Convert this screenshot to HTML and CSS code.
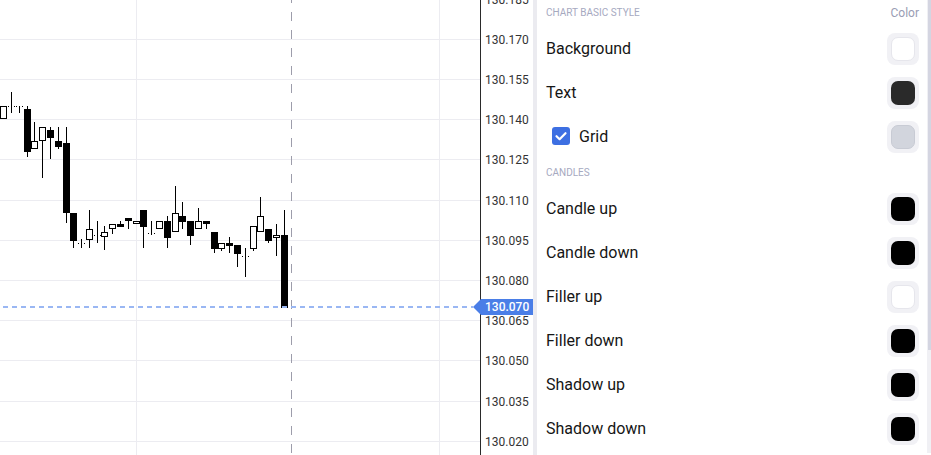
FILE: index.html
```html
<!DOCTYPE html>
<html lang="en">
<head>
<meta charset="utf-8">
<title>Chart style</title>
<link rel="stylesheet" href="styles.css">
</head>
<body>
<div class="app">
  <div class="chart-wrap">
    <svg class="chart" width="533" height="455" viewBox="0 0 533 455" xmlns="http://www.w3.org/2000/svg">
      <g class="grid" stroke="#ececf1" stroke-width="1" shape-rendering="crispEdges">
        <line x1="0" y1="39.5" x2="480" y2="39.5"/>
        <line x1="0" y1="79.5" x2="480" y2="79.5"/>
        <line x1="0" y1="119.5" x2="480" y2="119.5"/>
        <line x1="0" y1="159.5" x2="480" y2="159.5"/>
        <line x1="0" y1="200.5" x2="480" y2="200.5"/>
        <line x1="0" y1="240.5" x2="480" y2="240.5"/>
        <line x1="0" y1="280.5" x2="480" y2="280.5"/>
        <line x1="0" y1="320.5" x2="480" y2="320.5"/>
        <line x1="0" y1="360.5" x2="480" y2="360.5"/>
        <line x1="0" y1="401.5" x2="480" y2="401.5"/>
        <line x1="0" y1="441.5" x2="480" y2="441.5"/>
        <line x1="136.5" y1="0" x2="136.5" y2="455"/>
        <line x1="439.5" y1="0" x2="439.5" y2="455"/>
      </g>

      <line x1="291.5" y1="0" x2="291.5" y2="455" stroke="#9d9dab" stroke-width="1" stroke-dasharray="9 9" stroke-dashoffset="6" shape-rendering="crispEdges"/>

      <g class="candles" shape-rendering="crispEdges">
        <g stroke="#000" stroke-width="1">
          <line x1="11.5" y1="92" x2="11.5" y2="113"/>
          <line x1="19.5" y1="106" x2="19.5" y2="113"/>
          <line x1="27.5" y1="106" x2="27.5" y2="157"/>
          <line x1="34.5" y1="122" x2="34.5" y2="141"/>
          <line x1="42.5" y1="141" x2="42.5" y2="178"/>
          <line x1="50.5" y1="127" x2="50.5" y2="159"/>
          <line x1="58.5" y1="127" x2="58.5" y2="149"/>
          <line x1="66.5" y1="127" x2="66.5" y2="223"/>
          <line x1="73.5" y1="213" x2="73.5" y2="248"/>
          <line x1="81.5" y1="239" x2="81.5" y2="248"/>
          <line x1="89.5" y1="210" x2="89.5" y2="248"/>
          <line x1="97.5" y1="221" x2="97.5" y2="243"/>
          <line x1="104.5" y1="226" x2="104.5" y2="250"/>
          <line x1="112.5" y1="229" x2="112.5" y2="234"/>
          <line x1="120.5" y1="221" x2="120.5" y2="227"/>
          <line x1="128.5" y1="218" x2="128.5" y2="229"/>
          <line x1="143.5" y1="210" x2="143.5" y2="248"/>
          <line x1="151.5" y1="221" x2="151.5" y2="235"/>
          <line x1="167.5" y1="216" x2="167.5" y2="248"/>
          <line x1="175.5" y1="186" x2="175.5" y2="213"/>
          <line x1="182.5" y1="202" x2="182.5" y2="229"/>
          <line x1="190.5" y1="221" x2="190.5" y2="245"/>
          <line x1="198.5" y1="208" x2="198.5" y2="221"/>
          <line x1="206.5" y1="221" x2="206.5" y2="229"/>
          <line x1="214.5" y1="232" x2="214.5" y2="253"/>
          <line x1="221.5" y1="249" x2="221.5" y2="251"/>
          <line x1="229.5" y1="237" x2="229.5" y2="253"/>
          <line x1="237.5" y1="245" x2="237.5" y2="267"/>
          <line x1="245.5" y1="248" x2="245.5" y2="277"/>
          <line x1="253.5" y1="249" x2="253.5" y2="251"/>
          <line x1="260.5" y1="197" x2="260.5" y2="216"/>
          <line x1="268.5" y1="229" x2="268.5" y2="243"/>
          <line x1="276.5" y1="224" x2="276.5" y2="256"/>
          <line x1="284.5" y1="210" x2="284.5" y2="236"/>
        </g>
        <g stroke="#000" stroke-width="1" stroke-dasharray="1 2">
          <line x1="8" y1="106.5" x2="16" y2="106.5"/>
          <line x1="16" y1="106.5" x2="24" y2="106.5"/>
          <line x1="78" y1="243.5" x2="86" y2="243.5"/>
          <line x1="94" y1="235.5" x2="101" y2="235.5"/>
          <line x1="148" y1="233.5" x2="156" y2="233.5"/>
          <line x1="242" y1="256.5" x2="250" y2="256.5"/>
        </g>
        <g fill="#000">
          <rect x="24" y="109" width="7" height="43"/>
          <rect x="47" y="130" width="7" height="8"/>
          <rect x="55" y="141" width="7" height="6"/>
          <rect x="63" y="143" width="7" height="70"/>
          <rect x="70" y="213" width="7" height="28"/>
          <rect x="117" y="224" width="7" height="3"/>
          <rect x="125" y="218" width="7" height="3"/>
          <rect x="140" y="210" width="7" height="17"/>
          <rect x="164" y="221" width="7" height="17"/>
          <rect x="179" y="216" width="7" height="6"/>
          <rect x="187" y="221" width="7" height="15"/>
          <rect x="203" y="221" width="7" height="3"/>
          <rect x="211" y="232" width="7" height="17"/>
          <rect x="226" y="243" width="7" height="3"/>
          <rect x="234" y="245" width="7" height="9"/>
          <rect x="265" y="229" width="7" height="12"/>
          <rect x="281" y="235" width="7" height="73"/>
        </g>
        <g fill="#fff" stroke="#000" stroke-width="1">
          <rect x="0.5" y="106.5" width="6" height="12"/>
          <rect x="31.5" y="141.5" width="6" height="7"/>
          <rect x="39.5" y="127.5" width="6" height="13"/>
          <rect x="86.5" y="229.5" width="6" height="10"/>
          <rect x="101.5" y="232.5" width="6" height="4"/>
          <rect x="109.5" y="224.5" width="6" height="4"/>
          <rect x="133.5" y="221.5" width="6" height="2"/>
          <rect x="156.5" y="221.5" width="6" height="7"/>
          <rect x="172.5" y="213.5" width="6" height="18"/>
          <rect x="195.5" y="221.5" width="6" height="7"/>
          <rect x="218.5" y="243.5" width="6" height="5"/>
          <rect x="250.5" y="226.5" width="6" height="22"/>
          <rect x="257.5" y="216.5" width="6" height="15"/>
          <rect x="273.5" y="235.5" width="6" height="2"/>
        </g>
      </g>

      <line x1="3" y1="307" x2="473" y2="307" stroke="#9ab7f3" stroke-width="2" stroke-dasharray="5 4"/>

      <line x1="480.5" y1="0" x2="480.5" y2="455" stroke="#2a2a2a" stroke-width="1" shape-rendering="crispEdges"/>

      <g class="axis-labels">
        <text x="485" y="3.6">130.185</text>
        <text x="485" y="43.8">130.170</text>
        <text x="485" y="84">130.155</text>
        <text x="485" y="124.2">130.140</text>
        <text x="485" y="164.4">130.125</text>
        <text x="485" y="204.6">130.110</text>
        <text x="485" y="244.8">130.095</text>
        <text x="485" y="285">130.080</text>
        <text x="485" y="325.2">130.065</text>
        <text x="485" y="365.4">130.050</text>
        <text x="485" y="405.6">130.035</text>
        <text x="485" y="445.8">130.020</text>
      </g>

      <g class="price-tag">
        <polygon points="473,307 481,299 481,315" fill="#4a7ee7"/>
        <rect x="481" y="299" width="52" height="16" fill="#4a7ee7"/>
        <text x="485" y="311.3" class="price-text">130.070</text>
      </g>
    </svg>
  </div>

  <div class="divider"></div>

  <div class="panel">
    <div class="panel-inner">
      <div class="section-head first">
        <span class="head-title">CHART BASIC STYLE</span>
        <span class="head-col">Color</span>
      </div>
      <div class="row">
        <span class="row-label">Background</span>
        <span class="swatch"><span class="chip chip-white"></span></span>
      </div>
      <div class="row">
        <span class="row-label">Text</span>
        <span class="swatch"><span class="chip chip-dark"></span></span>
      </div>
      <div class="row">
        <span class="row-label with-check">
          <span class="checkbox">
            <svg width="18" height="18" viewBox="0 0 18 18"><path d="M4.5 9.2 L7.6 12.2 L13.5 6.2" fill="none" stroke="#fff" stroke-width="2.2" stroke-linecap="round" stroke-linejoin="round"/></svg>
          </span>
          Grid
        </span>
        <span class="swatch"><span class="chip chip-grid"></span></span>
      </div>
      <div class="section-head">
        <span class="head-title">CANDLES</span>
      </div>
      <div class="row">
        <span class="row-label">Candle up</span>
        <span class="swatch"><span class="chip chip-black"></span></span>
      </div>
      <div class="row">
        <span class="row-label">Candle down</span>
        <span class="swatch"><span class="chip chip-black"></span></span>
      </div>
      <div class="row">
        <span class="row-label">Filler up</span>
        <span class="swatch"><span class="chip chip-white"></span></span>
      </div>
      <div class="row">
        <span class="row-label">Filler down</span>
        <span class="swatch"><span class="chip chip-black"></span></span>
      </div>
      <div class="row">
        <span class="row-label">Shadow up</span>
        <span class="swatch"><span class="chip chip-black"></span></span>
      </div>
      <div class="row">
        <span class="row-label">Shadow down</span>
        <span class="swatch"><span class="chip chip-black"></span></span>
      </div>
    </div>
    <div class="scrollbar"><div class="thumb"></div></div>
  </div>
</div>
</body>
</html>
```

FILE: styles.css
```css
* { box-sizing: border-box; }

html, body {
  margin: 0;
  padding: 0;
  background: #fff;
  font-family: Roboto, "Liberation Sans", Arial, sans-serif;
}

.app {
  display: flex;
  width: 931px;
  height: 455px;
  overflow: hidden;
}

.chart-wrap {
  flex: 0 0 533px;
  height: 455px;
  background: #fff;
}

.chart { display: block; }

.axis-labels text {
  font-family: Roboto, "Liberation Sans", sans-serif;
  font-size: 12px;
  fill: #333;
}

.price-text {
  font-family: Roboto, "Liberation Sans", sans-serif;
  font-size: 12px;
  font-weight: 500;
  fill: #fff;
}

.divider {
  flex: 0 0 4px;
  background: #ebebf0;
}

.panel {
  flex: 1 1 auto;
  display: flex;
  height: 455px;
}

.panel-inner {
  flex: 1 1 auto;
  padding: 0 8px 0 9px;
}

.section-head {
  height: 28px;
  padding-bottom: 2px;
  display: flex;
  align-items: center;
  justify-content: space-between;
}

.section-head.first { height: 27px; }

.head-title {
  font-size: 10px;
  color: #a6a9bf;
}

.head-col {
  font-size: 12px;
  color: #9a9db4;
}

.row {
  height: 44px;
  display: flex;
  align-items: center;
  justify-content: space-between;
}

.row-label {
  font-size: 16px;
  color: #161616;
  margin-top: -2px;
}

.with-check {
  display: flex;
  align-items: center;
  gap: 9px;
  padding-left: 6px;
}

.checkbox {
  width: 18px;
  height: 18px;
  border-radius: 3px;
  background: #3d6fe2;
  display: flex;
}

.checkbox svg { display: block; }

.swatch {
  width: 32px;
  height: 32px;
  border-radius: 8px;
  background: #f1f1f5;
  display: flex;
  align-items: center;
  justify-content: center;
}

.chip {
  width: 24px;
  height: 24px;
  border-radius: 7px;
}

.chip-white { background: #fff; border: 1px solid #e6e6ec; }
.chip-dark { background: #2a2a2a; }
.chip-grid { background: #d2d5dd; border: 1px solid #c8cbd4; }
.chip-black { background: #000; }

.scrollbar {
  flex: 0 0 4px;
  height: 453px;
  background: #f0f0f4;
  padding-left: 1px;
}

.thumb {
  width: 3px;
  height: 350px;
  background: #d4d5e1;
}
```
